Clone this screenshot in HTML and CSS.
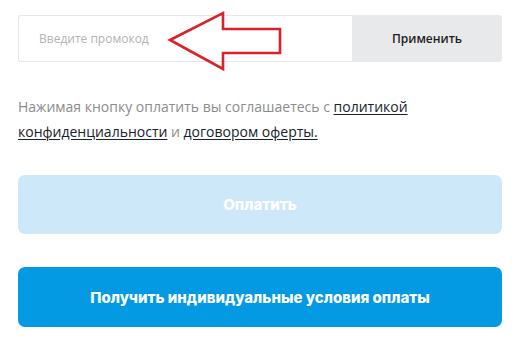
FILE: index.html
```html
<!DOCTYPE html>
<html lang="ru">
<head>
<meta charset="utf-8">
<link rel="stylesheet" href="styles.css">
</head>
<body>
<div class="page">
  <div class="promo">
    <div class="promo-input">Введите промокод</div>
    <div class="promo-btn">Применить</div>
    <svg class="arrow" width="120" height="64" viewBox="0 0 120 64">
      <polygon points="10,28 63,1 63,17 120,17 120,41 63,41 63,57" fill="none" stroke="#d8232c" stroke-width="2.6" stroke-linejoin="miter"/>
    </svg>
  </div>
  <p class="note">Нажимая кнопку оплатить вы соглашаетесь с <a class="link">политикой</a> <a class="link">конфиденциальности</a> и <a class="link">договором оферты.</a></p>
  <div class="btn btn-pay">Оплатить</div>
  <div class="btn btn-main">Получить индивидуальные условия оплаты</div>
</div>
</body>
</html>
```
FILE: styles.css
```css
html, body {
  margin: 0;
  padding: 0;
  background: #ffffff;
}
.page {
  padding: 15px 18px 0 18px;
  width: 484px;
  font-family: "Open Sans", sans-serif;
}
.promo {
  position: relative;
  display: flex;
  height: 47px;
}
.promo-input {
  flex: 1;
  box-sizing: border-box;
  border: 1px solid #e6e6e6;
  border-right: none;
  border-radius: 3px 0 0 3px;
  padding-left: 20px;
  display: flex;
  align-items: center;
  color: #b3b3b3;
  font-size: 12px;
}
.promo-btn {
  width: 150px;
  background: #e8e9eb;
  border-radius: 0 3px 3px 0;
  display: flex;
  align-items: center;
  justify-content: center;
  font-size: 12px;
  font-weight: 600;
  color: #1e1e1e;
}
.arrow {
  position: absolute;
  left: 142px;
  top: -3px;
  overflow: visible;
}
.note {
  margin: 32px 0 0 0;
  font-size: 14px;
  line-height: 25px;
  color: #8c8c8c;
}
.link {
  color: #17222c;
  text-decoration: underline;
  text-underline-offset: 2px;
}
.btn {
  height: 59px;
  border-radius: 7px;
  display: flex;
  align-items: center;
  justify-content: center;
  color: #ffffff;
  font-family: "Inter", sans-serif;
  font-weight: 800;
  font-size: 15px;
}
.btn-pay {
  margin-top: 31px;
  background: #cde9f9;
}
.btn-main {
  margin-top: 33px;
  height: 60px;
  background: #0399e3;
}
```
